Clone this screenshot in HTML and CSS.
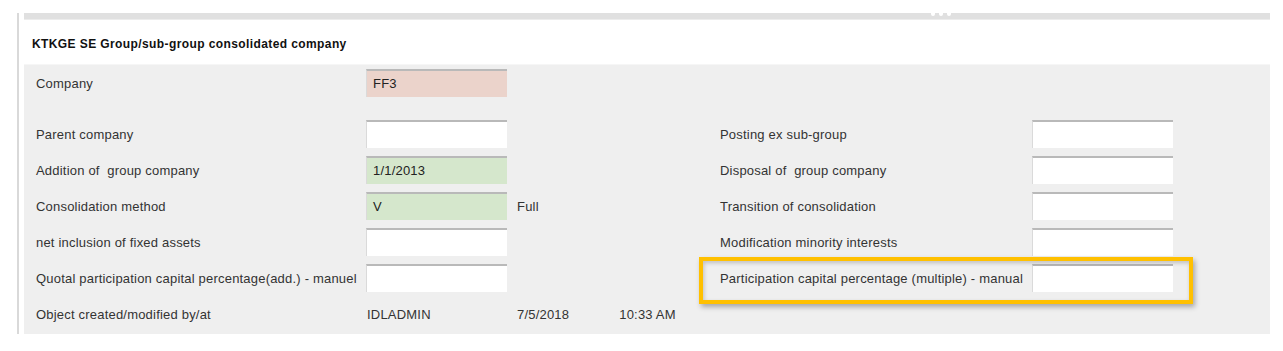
FILE: index.html
```html
<!DOCTYPE html>
<html lang="en">
<head>
    <meta charset="UTF-8">
    <meta name="viewport" content="width=device-width, initial-scale=1.0">
    <title>KTKGE SE Group/sub-group consolidated company</title>
    <link rel="stylesheet" href="styles.css">
</head>
<body>
    <div class="frame">
        <div class="panel">
            <div class="topbar">
                <span class="grip"><i></i><i></i><i></i></span>
            </div>
            <div class="header">KTKGE SE Group/sub-group consolidated company</div>

            <div class="form">
                <div class="row">
                    <div class="label">Company</div>
                    <div class="field key">FF3</div>
                </div>

                <div class="spacer"></div>

                <div class="row">
                    <div class="label">Parent company</div>
                    <div class="field"></div>
                    <div class="extra"></div>
                    <div class="label">Posting ex sub-group</div>
                    <div class="field"></div>
                </div>
                <div class="row">
                    <div class="label">Addition of &nbsp;group company</div>
                    <div class="field ok">1/1/2013</div>
                    <div class="extra"></div>
                    <div class="label">Disposal of &nbsp;group company</div>
                    <div class="field"></div>
                </div>
                <div class="row">
                    <div class="label">Consolidation method</div>
                    <div class="field ok">V</div>
                    <div class="extra">Full</div>
                    <div class="label">Transition of consolidation</div>
                    <div class="field"></div>
                </div>
                <div class="row">
                    <div class="label">net inclusion of fixed assets</div>
                    <div class="field"></div>
                    <div class="extra"></div>
                    <div class="label">Modification minority interests</div>
                    <div class="field"></div>
                </div>
                <div class="row">
                    <div class="label">Quotal participation capital percentage(add.) - manuel</div>
                    <div class="field"></div>
                    <div class="extra"></div>
                    <div class="label highlight-cell">
                        Participation capital percentage (multiple) - manual
                        <span class="highlight"></span>
                    </div>
                    <div class="field"></div>
                </div>
                <div class="row">
                    <div class="label">Object created/modified by/at</div>
                    <div class="value">IDLADMIN</div>
                    <div class="extra stamp">
                        <span>7/5/2018</span>
                        <span>10:33 AM</span>
                    </div>
                </div>
            </div>
        </div>
    </div>
</body>
</html>
```

FILE: styles.css
```css
body {
    margin: 0;
    background-color: #fff;
    font-family: Arial, "Liberation Sans", sans-serif;
    font-size: 13px;
    letter-spacing: 0.2px;
    color: #333;
}
.frame {
    margin: 13px 0 0 17px;
    padding-left: 5px;
    border-left: 2px solid #d9d9d9;
    width: 1246px;
    height: 321px;
}
.panel {
    width: 1246px;
}
.topbar {
    position: relative;
    height: 6px;
    background-color: #e0e0e0;
    border-bottom: 1px solid #ececec;
}
.grip {
    position: absolute;
    left: 907px;
    top: 0;
    display: flex;
    gap: 4px;
}
.grip i {
    width: 4px;
    height: 3px;
    background-color: #fff;
    border-radius: 0 0 2px 2px;
}
.header {
    height: 44px;
    line-height: 48px;
    padding-left: 8px;
    font-size: 12px;
    font-weight: bold;
    letter-spacing: 0.4px;
    color: #111;
    border-bottom: 1px solid #f6f6f6;
}
.form {
    background-color: #efefef;
    padding-bottom: 2px;
}
.row {
    display: grid;
    grid-template-columns: 330px 141px 213px 312px 141px;
    height: 36px;
    align-items: center;
    padding-left: 12px;
}
.spacer {
    height: 15px;
}
.label {
    white-space: nowrap;
}
.field {
    box-sizing: border-box;
    height: 28px;
    line-height: 26px;
    padding-left: 6px;
    background-color: #fff;
    border-top: 2px solid #b9b9b9;
    border-left: 1px solid #dadada;
    color: #222;
}
.field.key {
    background-color: #ebd3cb;
}
.field.ok {
    background-color: #d5e7cc;
}
.value {
    padding-left: 1px;
}
.extra {
    padding-left: 10px;
}
.stamp {
    display: flex;
    gap: 50px;
}
.highlight-cell {
    position: relative;
}
.highlight {
    position: absolute;
    left: -21px;
    top: -14px;
    width: 486px;
    height: 39px;
    border: 4px solid #ffc000;
    box-shadow: 2px 3px 5px rgba(0, 0, 0, 0.3), inset 1px 2px 4px rgba(0, 0, 0, 0.2);
    pointer-events: none;
}
```
